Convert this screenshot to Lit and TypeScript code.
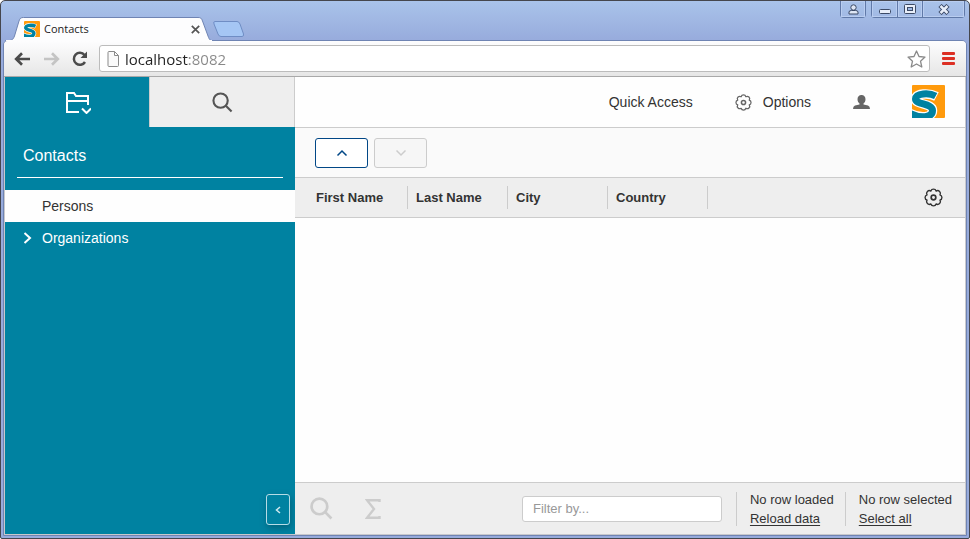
import { LitElement, html, css, svg } from "lit";
import { customElement, property } from "lit/decorators.js";

const gear = svg`
  <path d="M6.500 2.900A2.600 2.600 0 0 1 11.500 2.900A2.600 2.600 0 0 1 15.100 6.500A2.600 2.600 0 0 1 15.100 11.500A2.600 2.600 0 0 1 11.500 15.100A2.600 2.600 0 0 1 6.500 15.100A2.600 2.600 0 0 1 2.900 11.500A2.600 2.600 0 0 1 2.900 6.500A2.600 2.600 0 0 1 6.500 2.900Z" stroke-linejoin="round"/>
  <circle cx="9" cy="9" r="2.200" stroke-width="1.600"/>`;

const magnifier = svg`
  <circle cx="9" cy="9" r="7.500"/>
  <path d="M14.500 14.500L20.500 20.500"/>`;

@customElement("scout-logo")
class ScoutLogo extends LitElement {
  static styles = css`
    :host { display: block; flex: none; }
    svg { display: block; width: 100%; height: 100%; }
  `;
  render() {
    return html`<svg viewBox="0 0 33 33" role="img" aria-label="Scout">
      <rect width="33" height="33" rx="1" fill="#ff9a0c" />
      <g fill="none" stroke-linejoin="round">
        <path d="M24.500 11.500C17 7.500 4 8 3.500 14C3.500 20 20.500 18 20.500 25.500C20.500 33 8 33.500 -2 28.500" stroke="#fff" stroke-width="9.500" />
        <path d="M23.700 11C17 7.500 4 8 3.500 14C3.500 20 20.500 18 20.500 25.500C20.500 33 8 33.500 -2 28.500" stroke="#0082a1" stroke-width="7" />
      </g>
    </svg>`;
  }
}

@customElement("browser-tabs")
class BrowserTabs extends LitElement {
  @property() heading = "";
  static styles = css`
    :host { display: flex; height: 39px; align-items: flex-end; font: 11px/16px "Open Sans", sans-serif; }
    button { border: 0; padding: 0; background: none; font: inherit; color: inherit; display: block; }
    svg { display: block; }
    .tab { position: relative; width: 208px; height: 24px; margin: 0 0 -1px 2px; }
    .shape { position: absolute; inset: 0; }
    .label { position: relative; display: flex; align-items: center; height: 24px; padding: 0 13px 0 19px; }
    .label scout-logo { width: 16px; height: 16px; margin-right: 4px; }
    .title { flex: 1; color: #222; text-align: left; }
    .fresh { margin-bottom: 3px; }
    .spacer { flex: 1; }
    .controls { display: flex; align-self: flex-start; margin-right: 2px; gap: 5px; }
    .group { display: flex; border: 1px solid #6079a8; border-top: 0; border-radius: 0 0 4px 4px; }
    .group button { display: grid; place-items: center; width: 24px; height: 16px; box-shadow: inset 0 0 0 1px #b9cdf0; }
    .group button + button { border-left: 1px solid #6079a8; }
    .group .min { width: 25px; }
    .group .max { width: 25px; }
    .group .close { width: 42px; }
  `;
  render() {
    return html`
      <div class="tab">
        <svg class="shape" width="208" height="24" viewBox="0 0 208 24">
          <path d="M0 24C7 23.500 8 23 9.500 19L14 4C15 1 16 .5 18.500 .5H193C195.500 .5 196.500 1 197.500 4L203 19C204.500 23 205 23.500 208 24Z" fill="#fdfdfe" stroke="#6f84b3" />
          <path d="M1 24H207" stroke="#fdfdfe" stroke-width="2" />
        </svg>
        <div class="label">
          <scout-logo></scout-logo>
          <span class="title">${this.heading}</span>
          <button aria-label="Close tab">
            <svg width="9" height="9" stroke="#555" stroke-width="1.700"><path d="M.8 .8L8.200 8.200M8.200 .8L.8 8.200" /></svg>
          </button>
        </div>
      </div>
      <button class="fresh" aria-label="New tab">
        <svg width="32" height="16" viewBox="0 0 32 16">
          <path d="M2 .5H24Q26 .5 27 3L30.500 13Q31 15.500 29 15.500H8Q6 15.500 5 13L1 3Q0 .5 2 .5Z" fill="#a5c6f4" stroke="#6f8dc4" />
        </svg>
      </button>
      <div class="spacer"></div>
      <div class="controls">
        <div class="group">
          <button aria-label="Profile">
            <svg width="11" height="11" fill="#dfe7f5" stroke="#3c4a66"><circle cx="5.500" cy="3.500" r="2.700" /><path d="M1 10V8Q1 6.500 3.500 6.500H7.500Q10 6.500 10 8V10Z" /></svg>
          </button>
        </div>
        <div class="group">
          <button class="min" aria-label="Minimize">
            <svg width="12" height="10"><rect x=".5" y="5.500" width="11" height="4" rx="1" fill="#e8eef9" stroke="#3c4a66" /></svg>
          </button>
          <button class="max" aria-label="Maximize">
            <svg width="12" height="10" stroke="#3c4a66"><rect x=".5" y=".5" width="11" height="9" rx="1" fill="#e8eef9" /><rect x="3.500" y="3.500" width="5" height="3" fill="#9db7e3" /></svg>
          </button>
          <button class="close" aria-label="Close">
            <svg width="12" height="11" fill="none"><path d="M2 1.500L10 9.500M10 1.500L2 9.500" stroke="#3c4a66" stroke-width="4.500" /><path d="M2.500 2L9.500 9M9.500 2L2.500 9" stroke="#e8eef9" stroke-width="2.500" /></svg>
          </button>
        </div>
      </div>
    `;
  }
}

@customElement("browser-toolbar")
class BrowserToolbar extends LitElement {
  @property() address = "";
  static styles = css`
    :host { display: flex; align-items: center; height: 35px; padding: 0 11px 0 10px; background: linear-gradient(#fdfdfe, #e6e6e6); border-bottom: 1px solid #a9a9a9; }
    button { border: 0; padding: 0; background: none; display: block; }
    svg { display: block; flex: none; }
    .nav { display: flex; gap: 12px; align-items: center; margin-right: 11px; }
    .address { flex: 1; display: flex; align-items: center; height: 25px; padding: 0 3px 0 7px; gap: 6px; margin-right: 12px; background: #fff; border: 1px solid #bcbcbc; border-radius: 3px; }
    input {
      flex: 1; min-width: 0; border: 0; padding: 0; outline: 0; height: 24px;
      font: 15px/24px "Open Sans", sans-serif;
      background: linear-gradient(90deg, #222 64px, #888 64px);
      background-clip: text; -webkit-background-clip: text; color: transparent;
    }
  `;
  render() {
    return html`
      <div class="nav">
        <button aria-label="Back"><svg width="17" height="14" fill="none" stroke="#4b4b4b" stroke-width="2.700"><path d="M2 7H16M8 1.300L2.200 7L8 12.700" /></svg></button>
        <button aria-label="Forward" disabled><svg width="17" height="14" fill="none" stroke="#c4c4c4" stroke-width="2.700"><path d="M1 7H15M9 1.300L14.800 7L9 12.700" /></svg></button>
        <button aria-label="Reload"><svg width="16" height="16"><path d="M13 11A6 6 0 1 1 12.500 4" fill="none" stroke="#4b4b4b" stroke-width="2.500" /><path d="M15 .5V7H8.500Z" fill="#4b4b4b" /></svg></button>
      </div>
      <div class="address">
        <svg width="12" height="16" fill="#fafafa" stroke="#8a8a8a"><path d="M1 1.500Q1 .5 2 .5H7.500L11.500 4.500V14.500Q11.500 15.500 10.500 15.500H2Q1 15.500 1 14.500ZM7.500 .5V4.500H11.500" /></svg>
        <input aria-label="Address" .value=${this.address} />
        <button aria-label="Bookmark this page"><svg width="19" height="18" fill="none" stroke="#8a8a8a" stroke-width="1.300" stroke-linejoin="round"><path d="M9.500 1L12 6.500L18 7.100L13.500 11.200L14.800 17L9.500 14L4.200 17L5.500 11.200L1 7.100L7 6.500Z" /></svg></button>
      </div>
      <button aria-label="Menu"><svg width="13" height="14" fill="#dc2f24"><rect width="13" height="3" rx="1" /><rect y="5" width="13" height="3" rx="1" /><rect y="10" width="13" height="3" rx="1" /></svg></button>
    `;
  }
}

@customElement("outline-nav")
class OutlineNav extends LitElement {
  static styles = css`
    :host { display: flex; flex-direction: column; width: 290px; flex: none; background: #0082a1; color: #fff; }
    button { padding: 0; border: 0; background: none; color: inherit; }
    svg { display: block; }
    .views { display: flex; height: 50px; }
    .views button { flex: 1; display: grid; place-items: center; }
    .views .search { background: #eee; border: 1px solid #ccc; border-width: 0 1px; color: #555; }
    h1 { font-size: 16px; line-height: 24px; font-weight: normal; margin: 0 12px 12px; padding: 17px 6px 9px; border-bottom: 1px solid #fff; }
    ul { list-style: none; margin: 0; padding: 0; flex: 1; }
    a { display: flex; align-items: center; height: 32px; padding: 0 18px; color: inherit; text-decoration: none; font-size: 14px; }
    .twisty { width: 19px; }
    .selected { background: #fefefe; color: #333; }
    .collapse { align-self: flex-end; display: grid; place-items: center; width: 24px; height: 31px; margin: 0 5px 9px 0; border: 1px solid #b5dce6; border-radius: 3px; box-shadow: 1px 3px 6px #00506699; }
  `;
  render() {
    return html`
      <div class="views">
        <button aria-label="Outlines">
          <svg width="28" height="24" fill="none" stroke="#fff" stroke-width="2"><path d="M16 22H4V3H11L13 6H25V15M4 11H25M19 18.500L23.500 23L28 18.500" /></svg>
        </button>
        <button class="search" aria-label="Search">
          <svg width="21" height="21" viewBox="0 0 22 22" fill="none" stroke="#555" stroke-width="2.200">${magnifier}</svg>
        </button>
      </div>
      <h1>Contacts</h1>
      <ul>
        <li><a href="#persons" class="selected"><span class="twisty"></span>Persons</a></li>
        <li><a href="#organizations"><span class="twisty"><svg width="9" height="12" fill="none" stroke="#fff" stroke-width="2"><path d="M1.500 1L7 6L1.500 11" /></svg></span>Organizations</a></li>
      </ul>
      <button class="collapse" aria-label="Collapse navigation">
        <svg width="6" height="8" fill="none" stroke="#cfe9ef" stroke-width="1.500"><path d="M5 1L1.500 4L5 7" /></svg>
      </button>
    `;
  }
}

@customElement("contacts-table")
class ContactsTable extends LitElement {
  private columns = ["First Name", "Last Name", "City", "Country"];

  static styles = css`
    :host { display: flex; flex-direction: column; flex: 1; min-width: 0; background: #fefefe; color: #333; }
    button { padding: 0; background: none; border: 0; font: inherit; color: inherit; }
    svg { display: block; flex: none; }
    header { display: flex; align-items: center; justify-content: flex-end; height: 50px; padding-right: 20px; border-bottom: 1px solid #ccc; font-size: 14px; }
    .options { display: flex; align-items: center; gap: 11px; margin: 0 42px; }
    header scout-logo { width: 33px; height: 33px; margin: 0 0 1px 42px; }
    .tools { display: flex; gap: 6px; padding: 10px 20px 9px; background: #fafafa; border-bottom: 1px solid #ccc; }
    .tools button { display: grid; place-items: center; width: 53px; height: 30px; border: 1px solid #014786; border-radius: 3px; background: #fff; color: #014786; }
    .tools button:disabled { border-color: #ccc; color: #ccc; background: #f6f6f6; }
    .rows { flex: 1; }
    .head { background: #eee; border-bottom: 1px solid #ccc; padding: 8px 22px 8px 13px; }
    table { width: 100%; border-collapse: separate; border-spacing: 0; table-layout: fixed; font-size: 13px; }
    th { width: 100px; height: 23px; box-sizing: border-box; padding: 0 0 0 8px; text-align: left; border-right: 1px solid #ccc; line-height: 16px; }
    .settings { width: auto; border: 0; padding: 0; }
    .settings button { display: block; margin-left: auto; }
    footer { display: flex; align-items: center; height: 51px; padding: 0 13px 0 15px; background: #eee; border-top: 1px solid #ccc; font-size: 13px; line-height: 19px; }
    .sum { margin-left: 32px; }
    input { box-sizing: border-box; width: 200px; height: 26px; margin: 0 14px 0 auto; padding: 0 10px; border: 1px solid #ccc; border-radius: 3px; background: #fff; font: inherit; color: inherit; }
    input::placeholder { color: #999; opacity: 1; }
    .status { display: flex; flex-direction: column; justify-content: center; align-items: flex-start; height: 34px; padding-left: 13px; border-left: 1px solid #ccc; white-space: nowrap; }
    .status + .status { margin-left: 11px; }
    a { color: inherit; text-underline-offset: 2px; }
  `;
  render() {
    return html`
      <header>
        <button>Quick Access</button>
        <button class="options">
          <svg width="17" height="17" viewBox="0 0 18 18" fill="none" stroke="#666" stroke-width="1.300">${gear}</svg>
          Options
        </button>
        <button aria-label="User">
          <svg width="17" height="14" fill="#666"><path d="M8.500 0C11 0 12.500 1.700 12.500 4.200C12.500 6.300 11.500 7.700 10.500 8.500V9.500L15 10.500Q17 11.200 17 14H0Q0 11.200 2 10.500L6.500 9.500V8.500C5.500 7.700 4.500 6.300 4.500 4.200C4.500 1.700 6 0 8.500 0Z" /></svg>
        </button>
        <scout-logo></scout-logo>
      </header>
      <div class="tools">
        <button aria-label="Up"><svg width="12" height="8" fill="none" stroke="currentColor" stroke-width="1.500"><path d="M1.500 6.500L6 2L10.500 6.500" /></svg></button>
        <button aria-label="Down" disabled><svg width="12" height="8" fill="none" stroke="currentColor" stroke-width="1.500"><path d="M1.500 1.500L6 6L10.500 1.500" /></svg></button>
      </div>
      <div class="rows">
        <div class="head">
          <table>
            <thead>
              <tr>
                ${this.columns.map((name) => html`<th scope="col">${name}</th>`)}
                <td class="settings">
                  <button aria-label="Table settings"><svg width="19" height="19" viewBox="0 0 18 18" fill="none" stroke="#333" stroke-width="1.300">${gear}</svg></button>
                </td>
              </tr>
            </thead>
            <tbody></tbody>
          </table>
        </div>
      </div>
      <footer>
        <button aria-label="Search rows"><svg width="23" height="23" viewBox="0 0 22 22" fill="none" stroke="#ccc" stroke-width="2.600">${magnifier}</svg></button>
        <button class="sum" aria-label="Aggregate"><svg width="16" height="20" fill="none" stroke="#ccc" stroke-width="2.400"><path d="M14.500 3V1.200H2L9 10L2 18.800H14.500V17" /></svg></button>
        <input type="text" aria-label="Filter" placeholder="Filter by..." />
        <div class="status"><span>No row loaded</span><a href="#reload">Reload data</a></div>
        <div class="status"><span>No row selected</span><a href="#all">Select all</a></div>
      </footer>
    `;
  }
}

@customElement("app-root")
class AppRoot extends LitElement {
  static styles = css`
    :host { display: block; background: #fff; font-family: "Liberation Sans", Arial, sans-serif; }
    .window { box-sizing: border-box; display: flex; flex-direction: column; min-height: 100vh; border: 1px solid #45464d; border-radius: 5px 5px 2px 2px; padding: 0 2px 2px; background: linear-gradient(#a9c3ea, #97abdc 40px, #97abdc); }
    .frame { flex: 1; display: flex; flex-direction: column; border: 1px solid #6f84b3; border-radius: 5px 5px 0 0; background: #c8c8cc; overflow: hidden; }
    .page { flex: 1; display: flex; margin: 0 1px 1px; }
    browser-tabs { z-index: 1; }
  `;
  render() {
    return html`
      <div class="window">
        <browser-tabs heading="Contacts"></browser-tabs>
        <div class="frame">
          <browser-toolbar address="localhost:8082"></browser-toolbar>
          <main class="page">
            <outline-nav></outline-nav>
            <contacts-table></contacts-table>
          </main>
        </div>
      </div>
    `;
  }
}
